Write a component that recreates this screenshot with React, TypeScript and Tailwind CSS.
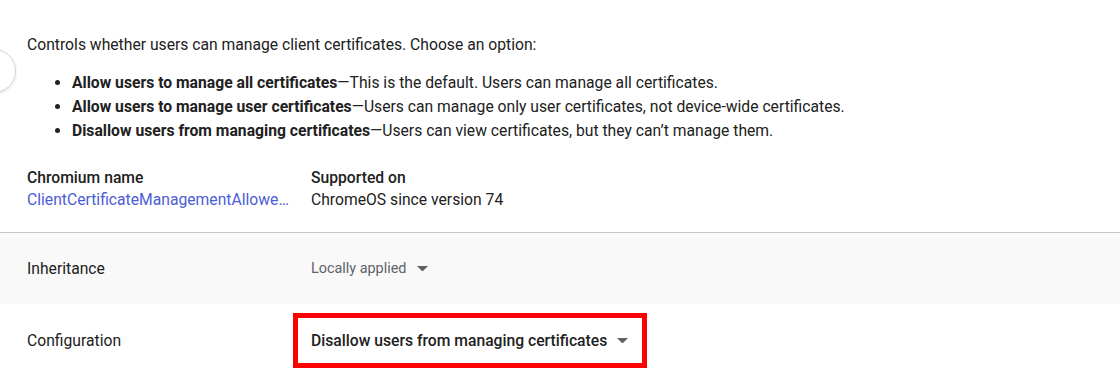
const options = [
  {
    title: 'Allow users to manage all certificates',
    text: 'This is the default. Users can manage all certificates.',
  },
  {
    title: 'Allow users to manage user certificates',
    text: 'Users can manage only user certificates, not device-wide certificates.',
  },
  {
    title: 'Disallow users from managing certificates',
    text: 'Users can view certificates, but they can\u2019t manage them.',
  },
];

function Caret({ className }: { className?: string }) {
  return (
    <svg width="11" height="5.5" viewBox="0 0 10 5" className={className}>
      <path d="M0 0h10L5 5z" fill="#616161" />
    </svg>
  );
}

export default function App() {
  return (
    <div
      className="relative w-[1120px] h-[392px] overflow-hidden bg-white text-[15.7px] text-[#212121]"
      style={{ fontFamily: 'Roboto, "Liberation Sans", sans-serif' }}
    >
      {/* partially hidden round button on the left edge */}
      <div className="absolute left-[-28px] top-[49px] w-[44px] h-[44px] rounded-full bg-white border border-[#d6d6d6] shadow-[0_1px_3px_rgba(0,0,0,0.12)]" />

      <section className="px-[27px] pt-[33px] pb-[21px] border-b border-[#c6c6c6]">
        <p className="leading-6">
          Controls whether users can manage client certificates. Choose an option:
        </p>
        <ul className="mt-[14px] pl-[45px] list-disc leading-6">
          {options.map((o) => (
            <li key={o.title}>
              <span className="font-bold">{o.title}</span>
              {'\u2014'}
              {o.text}
            </li>
          ))}
        </ul>
        <div className="mt-[24px] flex leading-[22px]">
          <div className="w-[284px]">
            <div className="font-medium">Chromium name</div>
            <div
              className="w-[264px] whitespace-nowrap overflow-hidden text-[#4c5dd6]"
              title="ClientCertificateManagementAllowed"
            >
              ClientCertificateManagementAllowe{'\u2026'}
            </div>
          </div>
          <div>
            <div className="font-medium">Supported on</div>
            <div>ChromeOS since version 74</div>
          </div>
        </div>
      </section>

      <div className="flex items-center h-[71px] px-[27px] bg-[#f9f9f9]">
        <div className="w-[284px]">Inheritance</div>
        <div className="flex items-center gap-[11px] text-[14.4px] text-[#5f6368]">
          Locally applied
          <Caret />
        </div>
      </div>

      <div className="flex items-center h-[73px] px-[27px]">
        <div className="w-[284px]">Configuration</div>
        <div className="-ml-[18px] flex items-center h-[55px] pl-[13px] pr-[14px] border-[5px] border-[#ff0000]">
          <span className="font-medium">Disallow users from managing certificates</span>
          <Caret className="ml-[10px]" />
        </div>
      </div>
    </div>
  );
}
